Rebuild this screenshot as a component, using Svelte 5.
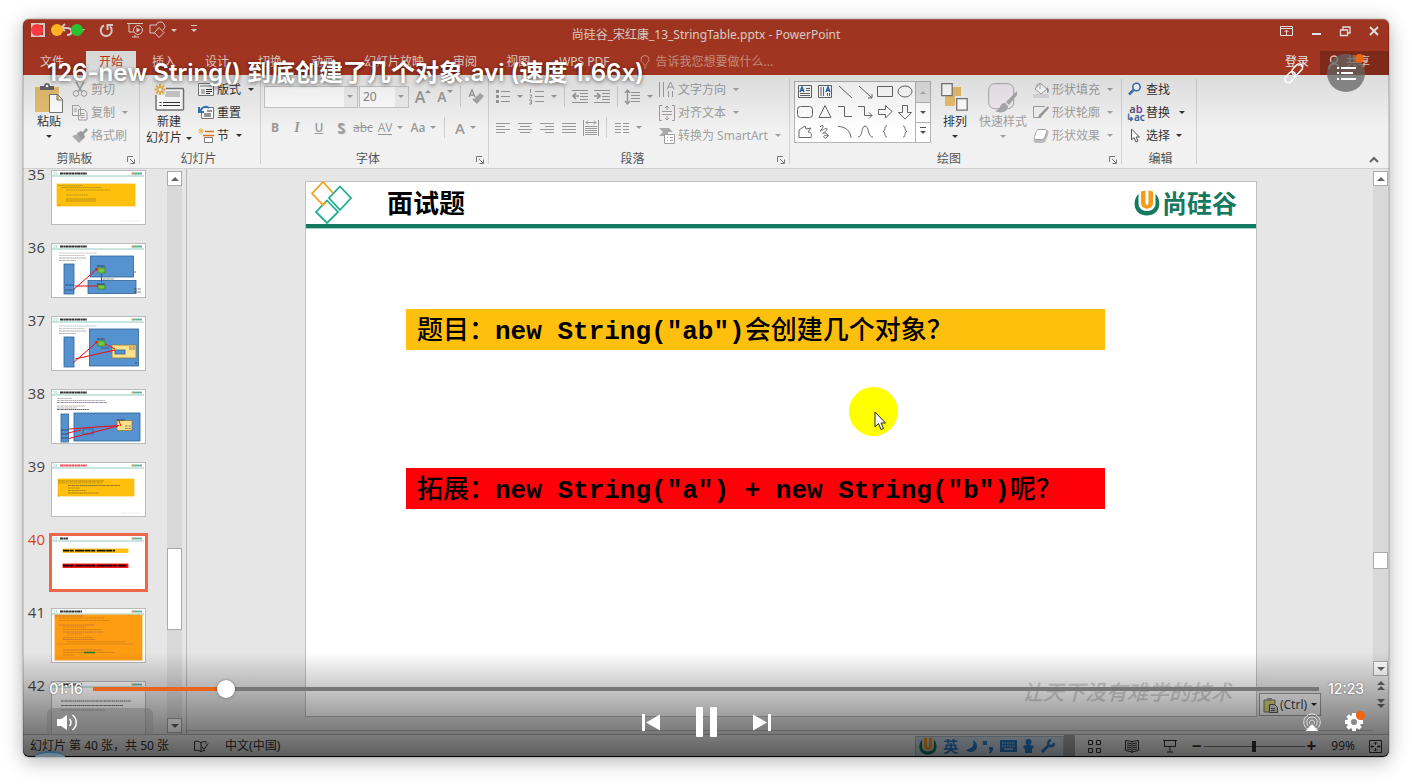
<script>
  const tabs = ['插入', '设计', '切换', '动画', '幻灯片放映', '审阅', '视图', 'WPS PDF'];
  let position = $state(76);
  let zoomLevel = $state(50);
  const duration = 743;

  const dash = (x, y, w, color = '#888', pattern = '2 .3 1.200 .4') =>
    `<path d="M${x} ${y}h${w}" stroke="${color}" stroke-width=".9" opacity=".75" stroke-dasharray="${pattern}"/>`;
  const header = (w, color = '#333') =>
    `<path d="M2 1.5l2 2-2 2M5 2l1 1.500-1 1.500" stroke="#7fd0bd" fill="none" stroke-width=".8"/>
     <path d="M9 3.500h${w}" stroke="${color}" stroke-width="1.800" stroke-dasharray="3 .4 2 .3"/>
     <path d="M81 3.500h10" stroke="#5fae98" stroke-width="1.800"/><path d="M80.500 3.500h2" stroke="#e3a94f" stroke-width="1.800"/>
     <path d="M1 6h92" stroke="#b7ddd4" stroke-width="1.400"/>`;
  const mark = dash(70, 51, 20, '#ddd', '1.500 .7');
  const box = (x, y, w, h, fill = '#5592cf', stroke = '#2e6496') =>
    `<rect x="${x}" y="${y}" width="${w}" height="${h}" fill="${fill}" stroke="${stroke}" stroke-width=".8"/>`;
  const red = (d) => `<path d="${d}" stroke="#f00a14" stroke-width="1" fill="none"/>`;
  const intro = dash(8, 10, 38, '#aaa') + dash(8, 12.5, 26, '#aaa') + dash(8, 15, 27, '#777') + dash(8, 17.5, 17, '#888');

  const slides = [
    { n: 35, art: header(27) + box(6, 14, 78, 22, '#ffbf0d', '#ffbf0d') + dash(7, 15.5, 25, '#a98a2a') + dash(10, 17.500, 40, '#a07f20') + dash(15, 20, 44, '#a07f20') + dash(15, 25, 22, '#a07f20') + dash(15, 29, 30, '#907010') + dash(15, 31, 30, '#907010') + dash(7, 35, 2, '#907010') + mark },
    { n: 36, art: header(27) + intro + box(39.5, 13, 43, 21) + box(37, 37.500, 48, 13) + box(13, 21, 10, 30) + box(47, 25, 7, 5, '#7cc142', '#3e8a2a') + box(47, 42, 7, 4, '#7cc142', '#3e8a2a') + dash(46, 23, 8, '#111') + dash(46, 41, 8, '#111') + dash(52, 36, 11, '#555') + dash(83, 29, 2, '#222') + dash(83, 46, 7, '#333') + dash(83, 49, 7, '#333') + dash(14, 42, 9, '#1a3c66') + dash(14, 47, 9, '#1a3c66') + red('M22 47L46 26M24 43H47M50.500 31v8M44 26l2-.5-.5 2') },
    { n: 37, art: header(27) + intro + box(38.5, 13, 49, 37) + box(13, 21, 10, 30) + box(61, 29, 24, 13, '#ffe28a', '#8f7c40') + box(64, 34, 10, 4) + box(47, 25, 7, 5, '#7cc142', '#3e8a2a') + dash(46, 23, 8, '#111') + dash(78, 31, 6, '#443') + dash(78, 33, 6, '#443') + dash(84, 47, 2, '#123') + dash(50, 32, 8, '#235') + red('M22 47L46 26M24 43L64 34M54 28L64 33M44 26l2-.5-.5 2') },
    { n: 38, art: header(27) + dash(6, 9.500, 15, '#999') + dash(6, 11.500, 48, '#888') + dash(6, 13.5, 50, '#648') + dash(6, 17, 28, '#888') + dash(6, 19, 20, '#888') + dash(6, 20.500, 32, '#222') + box(23, 24, 66, 28) + box(10, 25, 7.500, 28) + box(66, 31.500, 15, 10, '#ffe28a', '#8f7c40') + box(32, 40, 10, 5) + dash(66, 31, 8, '#111') + dash(74, 37, 6, '#554') + dash(74, 39.500, 6, '#554') + dash(10, 41, 8, '#123') + dash(10, 45, 8, '#123') + dash(10, 49, 8, '#123') + red('M18 40L68 36.500M17 44L30 41M18 49.500L67 37M68 32l2 5') },
    { n: 39, art: header(27, '#f04a58') + box(7, 17, 76, 17, '#ffbf0d', '#ffbf0d') + dash(7, 19, 46, '#7c5c00') + dash(7, 21, 44, '#a07f20') + dash(17, 23.500, 52, '#6b4a3a') + dash(17, 26, 12, '#907010') + dash(17, 28.500, 18, '#907010') + dash(17, 31, 31, '#806000') + dash(7, 34, 1, '#907010') + mark },
    { n: 40, current: true, art: header(8) + box(12, 14, 65, 3.500, '#ffbf0d', '#ffbf0d') + box(12, 29, 65, 3.500, '#fd0008', '#fd0008') + '<path d="M12 15.700h52M12 30.700h63" stroke="#111" stroke-width="1.800" stroke-dasharray="6 .6 4 1.500 9 .5"/>' + mark },
    { n: 41, art: header(22) + box(4, 7, 87, 45, '#ff9d12', '#ff9d12') + [8, 10, 12.5, 17, 19, 21.5, 24, 26, 29.5, 31.5, 34, 36, 42, 44.5, 47].map((y, i) => dash([4, 8, 8, 8, 12, 12, 12, 16, 12, 12, 16, 6, 12, 12, 12][i], y, [28, 45, 50, 36, 24, 38, 40, 15, 30, 32, 58, 76, 40, 52, 12][i], i % 3 ? '#c07514' : '#a56258')).join('') + '<path d="M33 44.500h11" stroke="#187a30" stroke-width="1.500"/>' },
    { n: 42, art: header(22) + dash(10, 20, 70, '#222') + dash(10, 24.500, 62, '#333') + dash(10, 29, 44, '#777') }
  ];

  const P = 'fill="none" stroke="currentColor"';
  const icons = {
    save: `<path ${P} stroke-width="2" d="M1 1h12v12H1z"/>`,
    undo: `<path ${P} stroke-width="2" d="M6 1L2 5l4 3M2 5h6c6 0 6 7 0 7"/>`,
    redo: `<path ${P} stroke-width="2" d="M5 2.500A5.500 5.500 0 1 0 11 3.500M8.500 7V2H14"/>`,
    show: `<path ${P} d="M0 1.500h16M2 2v8h5M8 13v2M5 15h7"/><circle cx="11" cy="8" r="4.500" ${P}/><path fill="currentColor" d="M9.500 5.500v5l4-2.500z"/>`,
    forms: `<path ${P} d="M6 11H1V3h7M10 5.500l5 5-5 5-4.500-5zM7 3a4.500 4.500 0 1 1 7 5"/>`,
    bulb: `<path ${P} d="M4 10C4 8 1 7 1 4.500a4 4 0 0 1 8 0C9 7 6 8 6 10M3.500 11h3M4 13h2"/>`,
    user: `<circle cx="6" cy="4.500" r="3.500" ${P} stroke-width="1.500"/><path ${P} stroke-width="1.500" d="M1 14c0-7 10-7 10 0"/>`,
    ribbonOpt: `<path ${P} d="M.5.5h12v9H.5zM.5 2.500h12M6.500 9V4.500M4.500 6l2-2 2 2"/>`,
    min: `<path ${P} stroke-width="2" d="M1 8h9"/>`,
    restore: `<path ${P} d="M3 3.500V1h7v6H8M.5 4h7v5.500h-7z" stroke-width="1.300"/>`,
    close: `<path ${P} stroke-width="1.900" d="M1 1l8 8M9 1L1 9"/>`,
    paste: `<path fill="#e6bf70" d="M0 4h24v25H0z"/><path fill="#666" d="M5 3h4c0-4 6-4 6 0h4v4H5z"/><circle cx="12" cy="3" r="1.300" fill="#fff"/><path fill="#fff" stroke="#777" d="M14.500 11.500h8l5 5v13h-13zM22 11.500v5.500h5.500"/>`,
    cut: `<path ${P} stroke-width="1.500" d="M4 0l6 10M12 0L6 10"/><circle cx="4" cy="11.500" r="2.800" ${P}/><circle cx="12" cy="11.500" r="2.800" ${P}/>`,
    copy: `<path fill="#f5f0f5" stroke="currentColor" d="M.5.5h6l2 2v8h-8zM6.500 4.500h6l2.500 3v7.500h-8.500zM2 4h3M2 6h3M8.500 8.500h4M8.500 10.500h4M8.500 12.500h4"/>`,
    brush: `<path fill="#aaa" d="M0 8l6-2 5 5-4 4z"/><path fill="#999" d="M5 5l4-2 2 1 3-4 2 2-4 4 1 3-3 3z"/>`,
    newSlide: `<path fill="#fff" stroke="#777" stroke-width="1.500" d="M4 5.500h25.500a1 1 0 0 1 1 1v19.500a1 1 0 0 1-1 1H4a1 1 0 0 1-1-1V6.500a1 1 0 0 1 1-1z"/><path fill="#ccc" d="M12 8h15v6H12z"/><path ${P} stroke="#999" d="M6.500 19.500h2M10 19.500h17M6.500 22.500h2M10 22.500h17"/><path fill="#f1f1f1" d="M0 0h13v12H0z"/><path fill="none" stroke="#eab654" stroke-width="2" d="M7 1v11M1.500 6.500h11M3 2.500l8 8M11 2.500l-8 8"/><circle cx="7" cy="6.500" r="1.500" fill="#fff"/>`,
    layout: `<path fill="#fff" stroke="#777" d="M.5 1.500h15v12H.5z"/><path fill="#bbb" d="M2 3h12v2H2zM3 7h4v5H3z"/><path ${P} stroke="#777" d="M8 7.500h6M8 9.500h6M8 11.500h4"/>`,
    reset: `<path fill="#fff" stroke="#777" d="M6.500 2.500h9v11H3.500V8"/><path ${P} stroke="#999" d="M9 6h5M6 9h7M6 11h7"/><path fill="none" stroke="#3273b5" stroke-width="2" d="M1 2v5h5M2 6c3-5 6-5 9-3"/>`,
    section: `<path fill="none" stroke="#e0711c" stroke-width="1.500" d="M7 3.500h9M5 7.500h11"/><path fill="#fff" stroke="#777" d="M6.500 9.500h8v5h-8z"/><path stroke="#eab654" fill="none" d="M3 0v6M0 3h6M1 1l4 4M5 1L1 5"/>`,
    eraser: `<path fill="#aaa" d="M6 10l6-6 4 3-7 8z"/><path ${P} stroke-width="1.300" d="M1 8l3-7 3 7M2 6h4M5 10l4 4"/>`,
    bullets: `<path ${P} d="M5 2.500h9M5 7.500h9M5 12.500h9"/><path fill="currentColor" d="M0 1h3v3H0zM0 6h3v3H0zM0 11h3v3H0z"/>`,
    numbers: `<path ${P} d="M6 2.500h9M6 7.500h9M6 12.500h9M1.500 0v4M.5 6h2v1.500L1 9h2M0 11h2.500v4H0M1 13h1"/>`,
    outdent: `<path ${P} d="M0 1.500h16M8 4.500h8M8 7.500h8M8 10.500h8M0 13.500h16"/><path ${P} stroke-width="1.700" d="M7 7H1M4 4L1 7l3 3"/>`,
    indent: `<path ${P} d="M0 1.500h16M8 4.500h8M8 7.500h8M8 10.500h8M0 13.500h16"/><path ${P} stroke-width="1.700" d="M0 7h6M3 4l3 3-3 3"/>`,
    spacing: `<path ${P} d="M6 3.500h9M6 6.500h9M6 9.500h9M6 12.500h9"/><path ${P} stroke-width="1.400" d="M2.500 1v14M0 4l2.500-3L5 4M0 12l2.500 3L5 12"/>`,
    left: `<path ${P} d="M0 2.500h14M0 5.500h9M0 8.500h14M0 11.500h9"/>`,
    center: `<path ${P} d="M0 2.500h14M2 5.500h10M0 8.500h14M2 11.500h10"/>`,
    right: `<path ${P} d="M0 2.500h14M5 5.500h9M0 8.500h14M5 11.500h9"/>`,
    justify: `<path ${P} d="M0 2.500h14M0 5.500h14M0 8.500h14M0 11.500h14"/>`,
    distribute: `<path ${P} d="M.5 0v16M15.500 0v16M2 6.500h12M2 8.500h12M2 10.500h12M2 12.500h12M2 14.500h12M3 2.500h10M5 .5l-2 2 2 2M11 .5l2 2-2 2"/>`,
    columns: `<path ${P} d="M0 2.500h6M0 5.500h6M0 8.500h6M0 11.500h6M8 2.500h6M8 5.500h6M8 8.500h6M8 11.500h6"/>`,
    textDir: `<path ${P} d="M.5 0v15M4.500 0v15M9.500 9v6M13.500 9v6M8 7.500L11.500 0 15 7.500M9 5h5"/>`,
    alignText: `<path fill="#f6edf6" stroke="currentColor" d="M3 .5H.5v15H3M13 .5h2.500v15H13M3 6.500h10M3 9.500h10M8 5V1M6 3l2-2 2 2M8 11v4M6 13l2 2 2-2"/>`,
    smart: `<path fill="#aaa" d="M0 0h10l4 4H4zM0 8l4-4h5v4z"/><path fill="#fff" stroke="currentColor" d="M5.500 6.500h10v9h-10zM8 9.500h1M11 9.500h3M8 12.500h1M11 12.500h3"/>`,
    arrange: `<path fill="#e9bf6d" d="M11 4h9v9h-9zM4 13h10v10H4z"/><path fill="#fff" stroke="#777" stroke-width="1.300" d="M.7.7h10.500v12H.7zM15.700 15.700h10.500v11.500H15.700z"/>`,
    quick: `<rect x=".7" y=".7" width="25" height="25" rx="6" fill="#f2ebf2" stroke="#aaa"/><path fill="#aaa" d="M29 8l-11 11 3 3 8-10zM17 20c-6 0-4 7-10 8 6 3 13 1 13-5z"/>`,
    fill: `<path fill="#ddd8e0" d="M0 12h16v4H0z"/><path fill="#fff" stroke="currentColor" d="M7 1l7 6-6 5-6-5zM7 1v6M4 5V2"/><path fill="#999" d="M14 5c3 3 2 6 0 6z"/>`,
    outline: `<path ${P} d="M12 1.500H.5v11H8"/><path fill="#999" d="M15 1l1 2-8 9-3 1 1-3z"/>`,
    effects: `<path fill="#bbb" d="M5 2h7c4 0 4 2 3 5l-2 5c-1 3-3 3-6 3H4c-3 0-4-2-3-4z"/><path fill="#fff" stroke="currentColor" d="M6 1.500h5c3 0 3 1 2.500 3l-1.500 4c-.5 2-2 3-4 3H4c-3 0-3-1-2.500-3L3 4.500c.5-2 1-3 3-3z"/>`,
    find: `<circle cx="8.500" cy="5" r="3.700" fill="#fff" stroke="#3a72b8" stroke-width="1.600"/><path stroke="#3a72b8" stroke-width="2.500" d="M5.500 8L1 12.500"/>`,
    select: `<path fill="#fff" stroke="#555" d="M3.500 1v11l2.500-2.500 2 4.500 2-1-2-4h3.500z"/>`,
    launcher: `<path ${P} d="M.5 6V.5H6M3 3l4 4M7.500 3.500v4h-4"/>`,
    shapeText: `<path ${P} d="M.5.5h13v12H.5zM8 3.500h4M8 5.500h4M2 8.500h10M2 10.500h10"/><path fill="none" stroke="#2f67a8" stroke-width="1.500" d="M2 7l2-5 2 5M3 5.500h2"/>`,
    shapeVert: `<path ${P} d="M.5.5h13v12H.5zM3 2v9M5.500 2v9M9.500 8v3M11.500 8v3"/><path fill="none" stroke="#2f67a8" stroke-width="1.500" d="M8 7l2-5 2 5M9 5.500h2"/>`,
    shapeLine: `<path ${P} d="M1 1l13 12"/>`,
    shapeArrow: `<path ${P} d="M1 1l13 12M14 9v4h-4"/>`,
    shapeRect: `<path ${P} d="M-.5 1.500h15v10h-15z"/>`,
    shapeOval: `<ellipse cx="7" cy="6.500" rx="7" ry="5.500" ${P}/>`,
    shapeRound: `<rect x="-.5" y="1.500" width="15" height="11" rx="3" ${P}/>`,
    shapeTri: `<path ${P} d="M7 .5l6 12H1z"/>`,
    shapeElbow: `<path ${P} d="M0 1.500h6.500v10H14"/>`,
    shapeElbowArrow: `<path ${P} d="M0 1.500h6.500v9H14M11 7.500l3 3-3 3"/>`,
    shapeR: `<path ${P} d="M.5 4.500h7V.500l6.500 6-6.500 6.500V9.500h-7z"/>`,
    shapeD: `<path ${P} d="M4.500.5h5v7h4L7 14 .5 7.500h4z"/>`,
    shapeFree: `<path ${P} d="M1 12.500V5l6-4 1 3 5-1-3 4c3 0 4 2 3 5.500z"/>`,
    shapeScrib: `<path ${P} d="M2 2c4-4 4 0 1 3-3 4 6-4 6-1S2 9 6 8c5-1 4 6 1 5-4-2 2-4 4-2"/>`,
    shapeArc: `<path ${P} d="M0 1.500c7 0 12 4 13 11"/>`,
    shapeCurve: `<path ${P} d="M0 12C5 12 3 1 7 1s3 12 8 11"/>`,
    shapeL: `<path ${P} d="M9 1C6 .5 8 6 5 6.500 8 7 6 12.500 9 12"/>`,
    shapeRB: `<path ${P} d="M5 1c3-.5 1 5 4 5.500C6 7 8 12.500 5 12"/>`,
    book: `<path ${P} d="M7 3C5 1 3 1 .5 1.500v9C3 10 5 10 7 12c1-1 2-1.500 4-1.500M7 3v9M7 3c1-1.500 3-1.500 5-1.500v2M8 6.500l2 3 4-6"/>`,
    sorter: `<path ${P} d="M.5.5h4v4h-4zM8.500.5h4v4h-4zM.5 8.500h4v4h-4zM8.500 8.500h4v4h-4z"/>`,
    reading: `<path ${P} d="M7 2.500L.5 1.500v10l6.500 1.500 6.500-1.500v-10zM7 2v12M2 4l4 .5M2 6l4 .5M2 8l4 .5M2 10l4 .5M8 4.500l4-.5M8 6.500l4-.5M8 8.500l4-.5M8 10.500l4-.5"/>`,
    present: `<path ${P} d="M0 1.500h14M1.500 2v5.500h11V2M7 8v5M4 13h6"/>`,
    fit: `<path ${P} d="M.5.5h12v12H.5zM6.500 2v3M5 3.500L6.500 2 8 3.500M6.500 11V8M5 9.500L6.500 11 8 9.500M2 6.500h3M3.500 5L2 6.500 3.500 8M11 6.500H8M9.500 5L11 6.500 9.500 8"/>`,
    moon: `<path fill="currentColor" d="M8 0c2 6-2 9-7 10 2 3 11 3 11-4 0-3-2-5-4-6z"/>`,
    punct: `<path fill="currentColor" d="M0 2h4v4H0zM6 8h4v3l-2 3H6l1-3H6z"/>`,
    keyboard: `<path fill="currentColor" d="M0 1h17v12H0z"/><path stroke="#cfdbe8" stroke-width="1.200" stroke-dasharray="1.500 1" d="M2 4h13M2 7h13"/><path stroke="#cfdbe8" stroke-width="1.200" d="M4 10h9"/>`,
    person: `<circle cx="5.500" cy="3" r="3" fill="currentColor"/><path fill="currentColor" d="M0 8c1-3 10-3 11 0l-2 2v4H2v-4z"/>`,
    wrench: `<path stroke="currentColor" stroke-width="3" d="M1 13l7-7"/><path fill="none" stroke="currentColor" stroke-width="2.500" d="M10 1c-4 1-3 7 0 6 2 0 3-1 3-3"/>`,
    clip: `<path fill="#d6cf70" stroke="#777" d="M1 3h11v12H1z"/><path fill="#999" d="M4 1h5v3H4z"/><path fill="#ccc" stroke="#555" d="M6.500 7.500h5l3 3v5h-8zM8 11.500h4M8 13.500h4"/>`,
    diamonds: `<g fill="none" stroke-width="1.800"><path stroke="#1fae91" d="M34 5.500L45 17 34 29 23 17zM21 19.500L32 31 21 42 10 31z"/><path stroke="#f99f1b" d="M20 21l-3 3L6 12.500 17 1l10 11"/></g>`,
    logo: `<path fill="#14795f" d="M4.500 4C-2 10-1 25.500 13 25.500S28 10 21.500 4v9.500c0 10-17 10-17 0z"/><path fill="#f39c1a" d="M7 1.500L11.500.5V13c0 2.500 3 2.500 3 0V.5l4.500 1V13c0 7.500-12 7.500-12 0z"/>`,
    link: `<g fill="none" stroke="currentColor" stroke-width="1.500" transform="rotate(-48 10 10)"><rect x="-2" y="6.500" width="12.500" height="7" rx="3.500"/><rect x="8.500" y="6.500" width="12.500" height="7" rx="3.500"/></g>`,
    list: `<path ${P} stroke-width="2" d="M0 1h2M4 1h15M0 6h2M4 6h12M0 12h2M4 12h15"/>`,
    volume: `<path fill="currentColor" d="M0 5h4l6-4v15l-6-4H0z"/><path ${P} stroke-width="1.500" d="M12.500 5c2 2 2 5 0 7M15.500 1c5 4 5 11 0 15"/>`,
    prev: `<path fill="currentColor" d="M0 0h3v17H0zM18 .5v16L4 8.500z"/>`,
    pause: `<rect width="7" height="30" rx="1" fill="currentColor"/><rect x="14" width="7" height="30" rx="1" fill="currentColor"/>`,
    next: `<path fill="currentColor" d="M15 0h3v17h-3zM0 .5v16l14-8z"/>`,
    airplay: `<g ${P} opacity=".75"><path d="M5 16.500A8.300 8.300 0 1 1 13 16.500"/><path d="M6 13.500a5.300 5.300 0 1 1 6 0"/><path d="M7 11a2.500 2.500 0 1 1 4 0"/></g><path fill="currentColor" d="M9 11l6.500 7h-13z"/>`,
    gear: `<circle cx="9" cy="9" r="5" ${P} stroke-width="4"/><path ${P} stroke-width="4" d="M9 0v3M9 15v3M0 9h3M15 9h3M2.600 2.600l2 2M13.400 13.400l2 2M2.600 15.400l2-2M13.400 4.600l2-2"/>`
  };
  const shapes = ['shapeText', 'shapeVert', 'shapeLine', 'shapeArrow', 'shapeRect', 'shapeOval', 'shapeRound', 'shapeTri', 'shapeElbow', 'shapeElbowArrow', 'shapeR', 'shapeD', 'shapeFree', 'shapeScrib', 'shapeArc', 'shapeCurve', 'shapeL', 'shapeRB'];
</script>

{#snippet icon(name, w = 16, h = w)}
  <svg class="icon" width={w} height={h} viewBox="0 0 {w} {h}" aria-hidden="true">{@html icons[name]}</svg>
{/snippet}

{#snippet row(name, text, arrow = true, off = false)}
  <button class="row" class:off>{@render icon(name)}<span>{text}</span>{#if arrow}<i class="caret"></i>{/if}</button>
{/snippet}

{#snippet tool(name, w = 14, h = 14, arrow = false)}
  <button class="tool" class:drop={arrow} aria-label={name}>{@render icon(name, w, h)}{#if arrow}<i class="caret"></i>{/if}</button>
{/snippet}

{#snippet caption(text, launch = true)}
  <footer class="caption"><span>{text}</span>{#if launch}<button aria-label={text}>{@render icon('launcher', 8, 8)}</button>{/if}</footer>
{/snippet}

<div class="page">
  <main class="window">
    <header class="titlebar">
      <div class="quick">
        <button aria-label="保存">{@render icon('save', 14)}</button>
        <button aria-label="撤消">{@render icon('undo', 14)}<i class="caret"></i></button>
        <button aria-label="重做">{@render icon('redo', 14)}</button>
        <button aria-label="放映">{@render icon('show')}</button>
        <button class="forms" aria-label="形状">{@render icon('forms')}<i class="caret"></i></button>
        <button class="more" aria-label="自定义"><i class="caret"></i></button>
      </div>
      <h1>尚硅谷_宋红康_13_StringTable.pptx - PowerPoint</h1>
      <div class="winbtns">
        <button aria-label="功能区">{@render icon('ribbonOpt', 13, 10)}</button>
        <button aria-label="最小化">{@render icon('min', 11, 10)}</button>
        <button aria-label="还原">{@render icon('restore', 11, 10)}</button>
        <button aria-label="关闭">{@render icon('close', 10)}</button>
      </div>
    </header>

    <nav class="tabs">
      <button class="file">文件</button>
      <button class="active">开始</button>
      {#each tabs as tab}<button>{tab}</button>{/each}
      <button class="tell">{@render icon('bulb', 10, 14)}告诉我您想要做什么...</button>
      <button class="login">登录</button>
      <button class="share">{@render icon('user', 12, 14)}<span>共享</span></button>
    </nav>

    <section class="ribbon">
      <div class="group clipboard">
        <div class="tools">
          <button class="big">{@render icon('paste', 28, 30)}<span>粘贴</span><i class="caret"></i></button>
          <div class="stack">
            {@render row('cut', '剪切', false, true)}
            {@render row('copy', '复制', true, true)}
            {@render row('brush', '格式刷', false, true)}
          </div>
        </div>
        {@render caption('剪贴板')}
      </div>
      <div class="group slidesgroup">
        <div class="tools">
          <button class="big">{@render icon('newSlide', 32, 30)}<span>新建</span><span class="tight">幻灯片<i class="caret"></i></span></button>
          <div class="stack">
            {@render row('layout', '版式')}
            {@render row('reset', '重置', false)}
            {@render row('section', '节')}
          </div>
        </div>
        {@render caption('幻灯片', false)}
      </div>
      <div class="group font">
        <div class="lines">
          <div class="line">
            <label class="combo wide"><select aria-label="字体"><option></option></select><i class="caret"></i></label>
            <label class="combo"><select aria-label="字号"><option>20</option></select><i class="caret"></i></label>
            <button class="glyph grow">A<i class="caret tip"></i></button>
            <button class="glyph shrink">A<i class="caret"></i></button>
            <hr />
            {@render tool('eraser', 16, 16)}
          </div>
          <div class="line">
            <button class="glyph b">B</button>
            <button class="glyph i">I</button>
            <button class="glyph u">U</button>
            <button class="glyph s">S</button>
            <button class="glyph abc">abc</button>
            <button class="glyph drop av"><span>AV</span><i class="caret"></i></button>
            <button class="glyph drop">Aa<i class="caret"></i></button>
            <hr />
            <button class="glyph drop color">A<i class="caret"></i></button>
          </div>
        </div>
        {@render caption('字体')}
      </div>
      <div class="group para">
        <div class="tools">
          <div class="lines">
            <div class="line">
              {@render tool('bullets', 14, 15, true)}
              {@render tool('numbers', 15, 15, true)}
              <hr />
              {@render tool('outdent', 16, 15)}
              {@render tool('indent', 16, 15)}
              <hr />
              {@render tool('spacing', 15, 16, true)}
            </div>
            <div class="line">
              {@render tool('left')}
              {@render tool('center')}
              {@render tool('right')}
              {@render tool('justify')}
              {@render tool('distribute', 16, 16)}
              <hr />
              {@render tool('columns', 14, 14, true)}
            </div>
          </div>
          <div class="stack">
            {@render row('textDir', '文字方向', true, true)}
            {@render row('alignText', '对齐文本', true, true)}
            {@render row('smart', '转换为 SmartArt', true, true)}
          </div>
        </div>
        {@render caption('段落')}
      </div>
      <div class="group drawing">
        <div class="tools">
          <div class="gallery">
            <div class="shapes">
              {#each shapes as shape}<button aria-label={shape}>{@render icon(shape, 14, 14)}</button>{/each}
            </div>
            <div class="scroller">
              <button class="up" aria-label="上"><i class="caret"></i></button>
              <button aria-label="下"><i class="caret"></i></button>
              <button class="more" aria-label="其他"><i class="caret"></i></button>
            </div>
          </div>
          <button class="big">{@render icon('arrange', 28, 30)}<span>排列</span><i class="caret"></i></button>
          <button class="big off">{@render icon('quick', 30, 30)}<span>快速样式</span><i class="caret"></i></button>
          <div class="stack">
            {@render row('fill', '形状填充', true, true)}
            {@render row('outline', '形状轮廓', true, true)}
            {@render row('effects', '形状效果', true, true)}
          </div>
        </div>
        {@render caption('绘图')}
      </div>
      <div class="group editing">
        <div class="stack">
          {@render row('find', '查找', false)}
          <button class="row"><span class="swap"><b>a<em>b</em></b><b>↳ac</b></span><span>替换</span><i class="caret far"></i></button>
          {@render row('select', '选择')}
        </div>
        {@render caption('编辑', false)}
      </div>
      <button class="collapse" aria-label="折叠功能区"><svg width="10" height="7" viewBox="0 0 10 7"><path d="M1 6l4-4 4 4" fill="none" stroke="#666" stroke-width="2" /></svg></button>
    </section>

    <section class="work">
      <aside class="thumbs">
        <ol>
          {#each slides as slide}
            <li class:current={slide.current}>
              <span>{slide.n}</span>
              <button aria-label="幻灯片 {slide.n}"><svg viewBox="0 0 95 55" fill="none" aria-hidden="true">{@html slide.art}</svg></button>
            </li>
          {/each}
        </ol>
        <div class="scroll">
          <button class="up" aria-label="向上滚动"><i class="caret"></i></button>
          <div class="track"><div class="before"></div><div class="grip"></div></div>
          <button aria-label="向下滚动"><i class="caret"></i></button>
        </div>
      </aside>

      <div class="canvas">
        <article class="slide">
          <header>
            {@render icon('diamonds', 48, 44)}
            <h2>面试题</h2>
            <div class="brand">{@render icon('logo', 26, 26)}<strong>尚硅谷</strong></div>
          </header>
          <p class="question">题目：<code>new String("ab")</code>会创建几个对象？</p>
          <p class="question extra">拓展：<code>new String("a") + new String("b")</code>呢？</p>
          <p class="motto">让天下没有难学的技术</p>
        </article>
        <button class="ctrl">{@render icon('clip', 15, 16)}(Ctrl)<i class="caret"></i></button>
        <div class="pointer"><svg width="12" height="20" viewBox="0 0 12 20"><path d="M1 1v15l3.500-3.500L7 18.500l2.500-1L7 12h4.500z" fill="#fff" stroke="#222" /></svg></div>
      </div>

      <div class="scroll main">
        <button class="up" aria-label="向上滚动"><i class="caret"></i></button>
        <div class="track"><div class="before"></div><div class="grip"></div></div>
        <button aria-label="向下滚动"><i class="caret"></i></button>
        <button class="page-step up" aria-label="上一张"><i class="caret"></i><i class="caret"></i></button>
        <button class="page-step" aria-label="下一张"><i class="caret"></i><i class="caret"></i></button>
      </div>
    </section>

    <footer class="status">
      <span>幻灯片 第 40 张，共 50 张</span>
      <button aria-label="拼写检查">{@render icon('book', 15, 13)}</button>
      <span class="lang">中文(中国)</span>
      <div class="ime">
        {@render icon('logo', 26, 26)}<b>英</b>
        {@render icon('moon', 12, 13)}{@render icon('punct', 10, 14)}{@render icon('keyboard', 17, 14)}{@render icon('person', 11, 14)}{@render icon('wrench', 14, 14)}
      </div>
      <div class="views">
        <button aria-label="浏览">{@render icon('sorter', 13, 13)}</button>
        <button aria-label="阅读">{@render icon('reading', 14, 14)}</button>
        <button aria-label="放映">{@render icon('present', 14, 14)}</button>
      </div>
      <div class="zoom">
        <button aria-label="缩小">−</button>
        <input type="range" aria-label="缩放" bind:value={zoomLevel} />
        <button aria-label="放大">+</button>
      </div>
      <span class="percent">99%</span>
      <button aria-label="适应窗口">{@render icon('fit', 13, 13)}</button>
    </footer>

    <div class="player">
      <div class="lights"><button aria-label="关闭窗口"></button><button aria-label="最小化窗口"></button><button aria-label="全屏"></button></div>
      <div class="top">
        <h2>126-new String() 到底创建了几个对象.avi (速度 1.66x)</h2>
        <button class="link" aria-label="链接">{@render icon('link', 20, 20)}</button>
        <button class="playlist" aria-label="播放列表">{@render icon('list', 19, 13)}</button>
      </div>
      <div class="orb"></div>
      <div class="controls">
        <div class="seek">
          <time>01:16</time>
          <input type="range" aria-label="进度" min="0" max={duration} bind:value={position} style="--played: {(position / duration) * 100}%" />
          <time>12:23</time>
        </div>
        <div class="buttons">
          <div class="sound"><button aria-label="音量">{@render icon('volume', 20, 17)}</button></div>
          <div class="transport">
            <button aria-label="上一个">{@render icon('prev', 18, 17)}</button>
            <button aria-label="暂停">{@render icon('pause', 21, 30)}</button>
            <button aria-label="下一个">{@render icon('next', 18, 17)}</button>
          </div>
          <div class="extras">
            <button aria-label="投放">{@render icon('airplay', 18, 18)}</button>
            <button class="settings" aria-label="设置">{@render icon('gear', 18, 18)}</button>
          </div>
        </div>
      </div>
    </div>
  </main>
</div>

<style>
  :global(body) { margin: 0; background: #fff; }
  .page { box-sizing: border-box; min-height: 100vh; padding: 19px 23px 27px; display: flex; font-family: 'Noto Sans', 'Noto Sans CJK SC', sans-serif; font-size: 12px; line-height: 16px; color: #333; }
  .page :global(*) { box-sizing: border-box; }
  button { font: inherit; color: inherit; background: none; border: 0; padding: 0; margin: 0; display: inline-flex; align-items: center; justify-content: center; white-space: nowrap; }
  h1, h2, p { margin: 0; font-weight: 400; }
  .icon { flex: none; overflow: visible; display: block; }
  .caret { flex: none; width: 0; height: 0; border: 3px solid transparent; border-top-color: currentColor; border-bottom: 0; }
  .up .caret, .caret.tip { border-top: 0; border-bottom: 3px solid currentColor; }
  .window { position: relative; flex: 1; min-width: 0; display: flex; flex-direction: column; border-radius: 6px; overflow: hidden; background: #e6e6e6; box-shadow: 0 4px 20px rgba(0, 0, 0, .3), 0 0 2px rgba(0, 0, 0, .4); }

  .titlebar { height: 32px; background: #b33b25; color: #f4e2de; display: grid; grid-template-columns: 1fr auto 1fr; align-items: center; }
  .titlebar h1 { font-size: 12px; }
  .quick { display: flex; align-items: center; padding: 0 0 10px 8px; gap: 14px; }
  .quick button { gap: 6px; }
  .quick .forms { margin-left: -8px; }
  .more .caret { position: relative; }
  .more .caret::before { content: ''; position: absolute; left: -3px; top: -7px; width: 6px; height: 1px; background: currentColor; }
  .winbtns { display: flex; justify-content: flex-end; gap: 18px; padding: 0 10px 8px 0; color: #fff; align-items: center; }

  .tabs { height: 24px; background: #b33b25; color: #f0d9d4; display: flex; gap: 3px; padding-left: 4px; }
  .tabs button { padding: 0 13px 2px; }
  .tabs .file { margin-right: 6px; }
  .tabs .active { background: #f1f1f1; color: #c43e1c; }
  .tabs .tell { color: #d99b8c; gap: 6px; padding-left: 14px; }
  .tabs .login { margin-left: auto; padding: 0 8px 2px; color: #fff; }
  .tabs .share { background: #8c2e1c; gap: 6px; padding: 0 19px 2px 8px; }

  .ribbon { display: flex; background: #f1f1f1; border-bottom: 1px solid #cfcfcf; padding: 3px 0 0; height: 94px; position: relative; }
  .group { flex: none; display: flex; flex-direction: column; position: relative; }
  .group::after { content: ''; position: absolute; right: 0; top: 1px; bottom: 4px; width: 1px; background: #d2d2d2; }
  .tools { display: flex; height: 69px; }
  .stack { display: flex; flex-direction: column; height: 69px; }
  .row { height: 23px; gap: 3px; justify-content: flex-start; }
  .row .caret { margin-left: 4px; }
  .row .far { margin-left: 7px; }
  .off { color: #a0a0a0; }
  .big { flex-direction: column; justify-content: flex-start; padding-top: 5px; line-height: 16px; }
  .big .icon { margin-bottom: 1px; }
  .big > .caret { margin-top: 5px; }
  .tight { display: flex; align-items: center; gap: 4px; }
  .caption { display: flex; align-items: center; height: 18px; color: #555; padding-right: 4px; margin-top: 3px; }
  .caption span { flex: 1; text-align: center; }
  .caption button { width: 10px; height: 10px; color: #777; margin-top: 2px; }
  .clipboard { width: 117px; }
  .clipboard .tools { padding-left: 12px; }
  .clipboard .stack { margin-left: 9px; }
  .slidesgroup { width: 121px; }
  .slidesgroup .tools { padding-left: 6px; gap: 6px; }
  .font { width: 228px; }
  .lines { display: flex; flex-direction: column; gap: 8px; padding: 7px 0 0 3px; height: 69px; }
  .line { display: flex; align-items: center; height: 23px; color: #999; }
  hr { width: 1px; height: 21px; border: 0; background: #cfcfcf; margin: 0 4px; }
  .combo { position: relative; width: 50px; height: 22px; display: flex; border: 1px solid #c8c8c8; background: #fff; align-items: center; margin-right: 1px; }
  .combo.wide { width: 94px; }
  .combo select { appearance: none; border: 0; background: none; font: inherit; color: #888; width: 100%; height: 100%; padding: 0 3px; }
  .combo .caret { position: absolute; right: 4px; color: #aaa; }
  .combo::after { content: ''; position: absolute; right: 0; top: 0; bottom: 0; width: 13px; background: rgba(0, 0, 0, .06); }
  .tool, .glyph { width: 22px; height: 22px; }
  .drop { width: 34px; gap: 7px; }
  .glyph { font-family: 'Open Sans', sans-serif; font-weight: 600; }
  .glyph.drop { width: 33px; gap: 5px; }
  .grow { font-size: 16px; margin-left: 2px; }
  .shrink { font-size: 14px; }
  .grow .caret, .shrink .caret { margin-top: -11px; }
  .b { font-weight: 700; }
  .i { font-style: italic; font-family: 'Liberation Serif', serif; font-size: 14px; }
  .u { text-decoration: underline; }
  .s { text-shadow: 1px 1px 1px #999; font-size: 14px; }
  .abc { text-decoration: line-through; font-weight: 400; }
  .av span { border-bottom: 1px solid; line-height: 13px; font-weight: 400; }
  .color { font-size: 15px; }
  .para { width: 301px; }
  .para .lines { width: 170px; flex: none; }
  .drawing { width: 332px; }
  .drawing .tools { padding-left: 4px; gap: 10px; }
  .gallery { display: flex; border: 1px solid #b4b4b4; background: #fff; width: 137px; height: 62px; margin-top: 3px; }
  .shapes { display: grid; grid-template-columns: repeat(6, 20px); flex: 1; color: #666; }
  .scroller { width: 15px; display: grid; grid-template-rows: repeat(3, 1fr); border-left: 1px solid #b4b4b4; color: #555; }
  .scroller button + button { border-top: 1px solid #b4b4b4; }
  .scroller .up { background: #e1e1e1; color: #aaa; }
  .drawing .stack { margin-left: -4px; }
  .editing { width: 75px; padding-left: 6px; }
  .editing .row { gap: 2px; }
  .swap { width: 16px; display: flex; flex-direction: column; line-height: 9px; font-size: 11px; color: #555; }
  .swap b { font-weight: 600; }
  .swap em { color: #7d3fa8; font-style: normal; }
  .swap b:last-child { color: #33659c; margin-left: -2px; font-size: 10px; }
  .collapse { margin: auto 10px 5px auto; }

  .work { flex: 1; display: flex; min-height: 0; }
  .thumbs { width: 164px; flex: none; display: flex; justify-content: space-between; border-right: 1px solid #b8b8b8; padding-right: 4px; overflow: hidden; }
  ol { list-style: none; margin: 0; padding: 1px 0 0 3px; height: 0; }
  li { display: flex; gap: 6px; height: 73px; align-items: flex-start; }
  li span { width: 19px; font-family: 'Open Sans', sans-serif; font-size: 15px; line-height: 16px; margin-top: -4px; color: #444; text-align: right; }
  li button { width: 95px; height: 55px; background: #fff; border: 1px solid #bbb; overflow: hidden; }
  li svg { width: 95px; height: 55px; flex: none; display: block; }
  li.current span { color: #d04727; }
  li.current button { border: 0; outline: 3px solid #f0664a; outline-offset: -1px; box-shadow: 0 0 0 2px #f0664a; }
  .scroll { width: 15px; flex: none; display: flex; flex-direction: column; padding: 2px 0 1px; }
  .scroll button { height: 15px; border: 1px solid #aaa; background: #fff; color: #666; flex: none; }
  .track { flex: 1; background: #d8d8d8; display: flex; flex-direction: column; min-height: 0; }
  .before { height: 68%; }
  .grip { height: 82px; background: #fff; border: 1px solid #aaa; }
  .main { margin-right: 1px; padding-bottom: 22px; }
  .main .before { height: 77%; }
  .main .grip { height: 17px; }
  .scroll .page-step { border: 0; background: none; flex-direction: column; height: 18px; gap: 1px; }
  .scroll .caret { border-width: 4px 4px 0; }
  .scroll .up .caret { border-width: 0 4px 4px; }
  .canvas { flex: 1; min-width: 0; position: relative; padding: 12px 16px 10px 18px; display: flex; justify-content: center; align-items: flex-start; border-bottom: 1px solid #bbb; margin-bottom: 3px; }
  .slide { width: calc(100% - 200px); aspect-ratio: 952 / 536; background: #fff; border: 1px solid #c0c0c0; display: flex; flex-direction: column; }
  .slide header { display: flex; align-items: center; height: 46px; border-bottom: 4px solid #127a61; flex: none; box-shadow: 0 1px #9fd0c3; }
  .slide h2 { font-size: 26px; line-height: 36px; font-weight: 700; color: #000; margin-left: 33px; }
  .brand { margin-left: auto; margin-right: 19px; display: flex; align-items: center; gap: 2px; color: #14795f; font-size: 25px; line-height: 30px; }
  .brand strong { font-weight: 700; }
  .question { margin: 81px 151px 0 100px; padding: 0 11px; height: 41px; background: #ffbf0d; color: #000; font-size: 26px; line-height: 41px; white-space: nowrap; font-weight: 500; }
  .question code { font: 700 26px/41px 'Liberation Mono', monospace; }
  .extra { background: #fd0008; margin-top: 118px; }
  .motto { margin: auto 24px 10px auto; font-size: 21px; line-height: 28px; font-style: italic; font-weight: 500; color: #d4d4d4; }
  .ctrl { position: absolute; right: 52px; bottom: 14px; width: 62px; height: 23px; border: 1px solid #999; background: #f4f4f4; gap: 2px; color: #444; }
  .ctrl .caret { color: #222; margin-left: 2px; }
  .pointer { position: absolute; left: calc(56% - 2px); top: calc(39% - 1px); width: 49px; height: 49px; border-radius: 50%; background: #ff0; }
  .pointer svg { position: absolute; left: 25px; top: 24px; }

  .status { height: 23px; flex: none; border-top: 1px solid #b8b8b8; background: #f1f1f1; display: flex; align-items: center; padding: 0 7px; }
  .status > button:not(:last-child) { margin: 0 16px 0 25px; }
  .ime { margin-left: auto; height: 21px; width: 149px; display: flex; align-items: center; justify-content: space-between; padding: 0 8px 0 0; background: #cfdce8; border: 1px solid #a8b8c8; color: #2b7fd0; }
  .ime .icon:first-child { width: 18px; height: 18px; margin-left: 3px; }
  .ime b { font-size: 15px; }
  .views { display: flex; gap: 24px; border-left: 11px solid #aaa; padding: 4px 15px 4px 13px; }
  .zoom { display: flex; align-items: center; font-size: 17px; font-weight: 700; gap: 2px; }
  .zoom input { appearance: none; width: 101px; height: 12px; margin: 0; background: linear-gradient(#777, #777) center / 100% 1px no-repeat; }
  .zoom input::-webkit-slider-thumb { appearance: none; width: 4px; height: 11px; background: #333; }
  .percent { margin: 0 14px 0 15px; }

  .player { position: absolute; inset: 0; color: #fff; border-radius: 6px; display: flex; flex-direction: column; background: linear-gradient(rgba(0, 0, 0, .13), rgba(0, 0, 0, .09) 56px, transparent 110px); box-shadow: inset 0 -1px #111, inset 1px 0 rgba(0, 0, 0, .15), inset -1px 0 rgba(0, 0, 0, .15), inset 0 1px rgba(255, 255, 255, .2); }
  .lights { display: flex; gap: 8px; padding: 5px 8px; }
  .lights button { width: 12px; height: 12px; border-radius: 50%; background: #ff3b41; }
  .lights button:nth-child(2) { background: #ffb323; }
  .lights button:nth-child(3) { background: #2bc232; }
  .top { display: flex; align-items: center; padding: 13px 24px 0 24px; }
  .top h2 { font-family: Inter, 'Noto Sans CJK SC', sans-serif; font-weight: 600; font-size: 24px; line-height: 28px; text-shadow: 0 1px 4px rgba(0, 0, 0, .6); flex: 1; white-space: nowrap; }
  .link { margin-right: 23px; }
  .playlist { width: 38px; height: 38px; border-radius: 50%; background: rgba(100, 100, 100, .75); position: relative; }
  .playlist::after, .settings::after { content: ''; position: absolute; right: 1px; top: 0; width: 9px; height: 9px; border-radius: 50%; background: #f0650f; }
  .orb { position: absolute; left: 12px; bottom: 0; width: 30px; height: 6px; border-top: 2px solid #2c5d80; border-radius: 50% 50% 0 0 / 100% 100% 0 0; background: #718390; }
  .controls { margin-top: auto; height: 105px; padding: 28px 24px 0 24px; background: linear-gradient(transparent, rgba(0, 0, 0, .62)); }
  .seek { display: flex; align-items: center; gap: 8px; height: 18px; }
  time { font: 500 14px/18px Inter, sans-serif; text-shadow: 0 0 2px rgba(0, 0, 0, .5); width: 38px; text-align: center; }
  .seek input { appearance: none; flex: 1; min-width: 0; height: 18px; margin: 0; background: linear-gradient(#e8651b, #e8651b) left / var(--played) 4px no-repeat, linear-gradient(#777, #777) center / 100% 4px no-repeat; }
  .seek input::-webkit-slider-thumb { appearance: none; width: 18px; height: 18px; border-radius: 50%; background: #fff; box-shadow: 0 0 3px rgba(0, 0, 0, .4); }
  .buttons { display: grid; grid-template-columns: 1fr auto 1fr; align-items: center; padding-top: 9px; }
  .sound { width: 106px; height: 28px; border-radius: 6px 6px 0 0; background: rgba(110, 110, 110, .45); display: flex; padding-left: 10px; }
  .transport { display: flex; gap: 36px; align-items: center; }
  .extras { display: flex; justify-content: flex-end; gap: 24px; padding-right: 2px; }
  .settings { position: relative; }
  .settings::after { right: -2px; top: -2px; }
</style>
